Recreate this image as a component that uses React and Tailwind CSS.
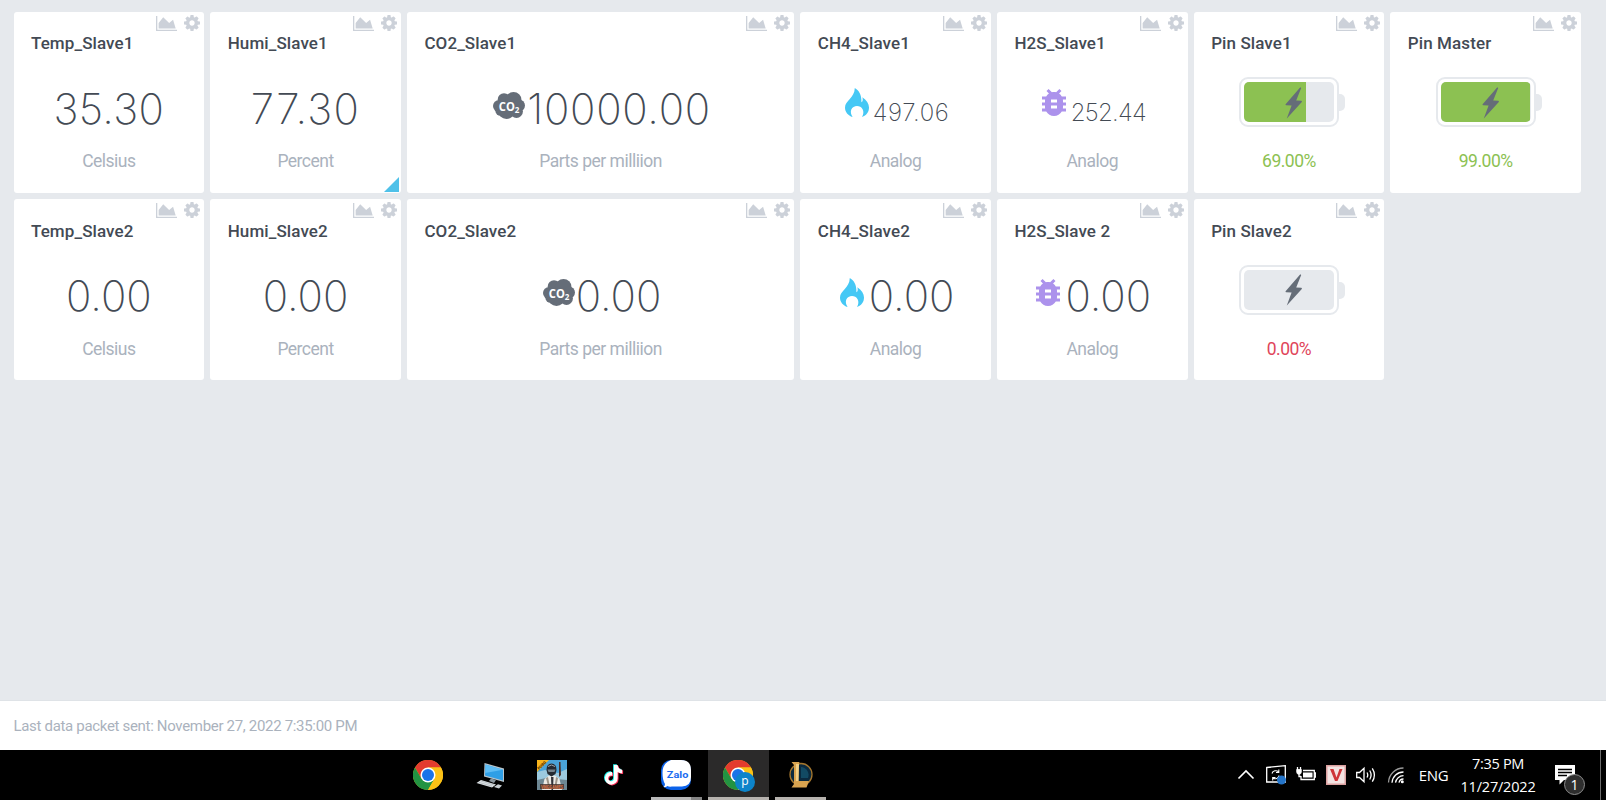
import { MdBugReport } from "react-icons/md";

const AreaIcon = () => (
  <svg viewBox="0 128 2048 1536" preserveAspectRatio="none" className="mt-px h-[15px] w-[21px]" fill="#ccd1d9">
    <path d="M2048 1536v128h-2048v-1536h128v1408h1920zm-384-1024l256 896h-1664v-576l448-576 576 576z" />
  </svg>
);

const CogIcon = () => (
  <svg viewBox="0 128 1536 1536" className="h-4 w-4" fill="#ccd1d9">
    <path d="M1024 896q0-106-75-181t-181-75-181 75-75 181 75 181 181 75 181-75 75-181zm512-109v222q0 12-8 23t-20 13l-185 28q-19 54-39 91 35 50 107 138 10 12 10 25t-9 23q-27 37-99 108t-94 71q-12 0-26-9l-138-108q-44 23-91 38-16 136-29 186-7 28-36 28h-222q-14 0-24.5-8.5t-11.5-21.5l-28-184q-49-16-90-37l-141 107q-10 9-25 9-14 0-25-11-126-114-165-168-7-10-7-23 0-12 8-23 15-21 51-66.5t54-70.5q-27-50-41-99l-183-27q-13-2-21-12.5t-8-23.5v-222q0-12 8-23t19-13l186-28q14-46 39-92-40-57-107-138-10-12-10-24 0-10 9-23 26-36 98.5-107.5t94.5-71.5q13 0 26 10l138 107q44-23 91-38 16-136 29-186 7-28 36-28h222q14 0 24.5 8.5t11.5 21.5l28 184q49 16 90 37l142-107q9-9 24-9 13 0 25 10 129 119 165 170 7 8 7 22 0 12-8 23-15 21-51 66.5t-54 70.5q26 50 41 98l183 28q13 2 21 12.5t8 23.5z" />
  </svg>
);

const Co2Icon = () => (
  <svg viewBox="0 0 32 27" className="h-[27px] w-8">
    <g fill="#656d78">
      <circle cx="11" cy="7.5" r="6.3" />
      <circle cx="20.5" cy="8" r="8" />
      <circle cx="6" cy="14" r="6" />
      <circle cx="26" cy="13.5" r="6" />
      <circle cx="13.5" cy="18.5" r="8.5" />
      <circle cx="23.5" cy="19.5" r="6.4" />
      <circle cx="7.5" cy="18.5" r="5.2" />
    </g>
    <text x="5.8" y="18.6" fill="#fff" fontFamily="Open Sans, sans-serif" fontWeight="700" fontSize="12" textLength="16" lengthAdjust="spacingAndGlyphs">CO</text>
    <text x="21.8" y="20.6" fill="#fff" fontFamily="Open Sans, sans-serif" fontWeight="700" fontSize="8">2</text>
  </svg>
);

const FlameIcon = () => (
  <svg viewBox="0 0 24 29" className="h-[29px] w-6" fill="#45c8f5">
    <path d="M9.8 0C13.5 2.2 16.8 6.2 16.4 14.2C18 13.3 18 11.4 17.3 9.2C21.6 12 24 15.5 24 19.6C24 24 21.6 27.6 17 29C18.6 26.5 18.8 23.6 17.6 21.3C16.5 19.1 14.3 18 12 18C9.4 18 7.3 19.3 6.3 21.6C5.4 23.9 5.9 26.7 7.6 29C3 27.3 0 24 0 19.4C0 12.8 9.6 9.8 9.8 0Z" />
  </svg>
);

const BugIcon = () => <MdBugReport viewBox="4 3 16 18" preserveAspectRatio="none" className="h-[27px] w-6 text-[#ac92ec]" />;

const Battery = ({ level, second }) => (
  <div className="relative h-[50px] w-[100px] rounded-[9px] border-2 border-[#e6e9ed] p-[3px]">
    <div className="h-10 w-[90px] overflow-hidden rounded-[5px] bg-[#e6e9ed]">
      <div className="h-full bg-[#8cc152]" style={{ width: `${level}%` }} />
    </div>
    <div className="absolute -right-[8px] top-[15px] h-[17px] w-[6px] rounded-r-[5px] bg-[#e6e9ed]" />
    <svg viewBox="0 0 18 32" className={`absolute left-[44px] h-8 w-[18px] ${second ? "top-[7px]" : "top-[8px]"}`} fill="#656d78">
      <path d="M15.3 0.3L0.6 17.2Q0.2 18 1.2 18.3L6.6 18.6L1.8 31.6L16.8 15Q17.3 14 16.3 13.7L11.2 13.4L16.2 1Z" />
    </svg>
  </div>
);

const icons = { co2: <Co2Icon />, flame: <FlameIcon />, bug: <BugIcon /> };

const rows = [
  [
    { title: "Temp_Slave1", value: "35.30", track: "tracking-[0.35px]", unit: "Celsius" },
    { title: "Humi_Slave1", value: "77.30", track: "tracking-[1.3px]", unit: "Percent", corner: true },
    { title: "CO2_Slave1", value: "10000.00", track: "tracking-[0.75px]", gap: "gap-[2px]", unit: "Parts per milliion", icon: "co2", wide: true },
    { title: "CH4_Slave1", value: "497.06", track: "tracking-[0.6px]", gap: "gap-[4px]", unit: "Analog", icon: "flame", small: true },
    { title: "H2S_Slave1", value: "252.44", track: "tracking-[-0.7px]", gap: "gap-[5px]", unit: "Analog", icon: "bug", small: true },
    { title: "Pin Slave1", level: 69, unit: "69.00%" },
    { title: "Pin Master", level: 99, unit: "99.00%" },
  ],
  [
    { title: "Temp_Slave2", value: "0.00", track: "tracking-[0px]", unit: "Celsius" },
    { title: "Humi_Slave2", value: "0.00", track: "tracking-[0px]", unit: "Percent" },
    { title: "CO2_Slave2", value: "0.00", track: "tracking-[0px]", gap: "gap-[1px]", unit: "Parts per milliion", icon: "co2", wide: true },
    { title: "CH4_Slave2", value: "0.00", track: "tracking-[0px]", gap: "gap-[5px]", unit: "Analog", icon: "flame" },
    { title: "H2S_Slave 2", value: "0.00", track: "tracking-[0px]", gap: "gap-[5px]", unit: "Analog", icon: "bug" },
    { title: "Pin Slave2", level: 0, unit: "0.00%" },
  ],
];

function Card({ title, value, track, gap, unit, icon, level, small, wide, corner, second }) {
  const battery = level !== undefined;
  const unitColor = !battery ? "text-[#aab2bd]" : level > 0 ? "text-[#8cc152]" : "text-[#e0455a]";
  return (
    <div className={`relative flex h-[181px] flex-col rounded-[3px] bg-white ${wide ? "col-span-2" : ""}`}>
      <div className="absolute right-[4px] top-[3px] flex gap-[7px]">
        <AreaIcon />
        <CogIcon />
      </div>
      <div className={`pl-[17.5px] text-[17px] font-medium leading-5 tracking-[0.1px] text-[#434a54] ${second ? "pt-[22px]" : "pt-[21px]"}`}>{title}</div>
      <div className={`flex h-[98px] items-center justify-center ${gap ? `${gap} pl-[3px]` : ""} ${second && !battery ? "-mt-px" : ""}`}>
        {battery ? (
          <Battery level={level} second={second} />
        ) : (
          <>
            {icon && <div className={small ? "" : "mt-[6px]"}>{icons[icon]}</div>}
            <span
              className={`font-[Inter] font-[160] leading-none text-[#434a54] ${track} ${
                small ? "mt-[21px] text-[24px]" : "mt-[13px] text-[42px]"
              }`}
            >
              {value}
            </span>
          </>
        )}
      </div>
      <div className={`text-center text-[17.5px] leading-5 tracking-[-0.5px] ${unitColor} ${second && !battery ? "mt-px" : ""}`}>{unit}</div>
      {corner && (
        <svg viewBox="0 0 15 15" className="absolute bottom-px right-[2px] h-[15px] w-[15px]" fill="#4fc1e9">
          <path d="M15 0V15H0Z" />
        </svg>
      )}
    </div>
  );
}

const Chrome = () => (
  <svg viewBox="0 0 48 48" className="h-[30px] w-[30px]">
    <circle cx="24" cy="24" r="24" fill="#fbc116" />
    <path d="M24 12H44.8A24 24 0 0 0 3.2 12L13.6 30Z" fill="#e33b2e" />
    <path d="M3.2 12A24 24 0 0 0 24 48L34.4 30L24 24L13.6 30Z" fill="#229342" />
    <path d="M24 12H44.8A24 24 0 0 1 24 48L34.4 30Z" fill="#fbc116" />
    <circle cx="24" cy="24" r="12" fill="#fff" />
    <circle cx="24" cy="24" r="9.6" fill="#1a73e8" />
  </svg>
);

const Computer = () => (
  <svg viewBox="0 0 30 30" className="h-[30px] w-[30px]">
    <path d="M9.500 3L29 8.500V22L9 16.500Z" fill="#b9c4cb" />
    <path d="M10.500 4.500L28 9.700V20.500L10 15.500Z" fill="#2f9fe6" />
    <path d="M10.500 4.500L28 9.700L10.200 13Z" fill="#5ebdf4" />
    <path d="M16 18.500L21 20L19 23L14 21Z" fill="#8b979f" />
    <path d="M6 20L21 24.500L17 27.500L1.500 23Z" fill="#dce1e4" />
    <path d="M23 24.200L27 25.400L24 28.500L19 27Z" fill="#c7ced2" />
    <path d="M4 22.400L17 26.200M6 21L19 25" stroke="#9ba5ab" strokeWidth=".5" />
  </svg>
);

const Pubg = () => (
  <svg viewBox="0 0 30 30" className="h-[30px] w-[30px]">
    <rect width="30" height="30" fill="#4aa3d8" />
    <path d="M0 12L8 10L21 13L30 9V30H0Z" fill="#9cc9de" />
    <path d="M0 20L9 18L30 20V30H0Z" fill="#6d8793" />
    <path d="M0 0H12L0 12Z" fill="#f8b41b" />
    <text x="0" y="0" transform="translate(2 10) rotate(-45)" fontFamily="Roboto, sans-serif" fontWeight="900" fontSize="4" fill="#553300">PUBG</text>
    <path d="M22 2L23.500 2L24 15L22 17Z" fill="#4d3029" />
    <path d="M5 30L7.500 19L12 15.500H18L22.500 19L25 30Z" fill="#eceae5" />
    <path d="M14 17L14.500 30H16L16.500 17Z" fill="#34343a" />
    <path d="M9 18L11 17L13 27L11.500 28ZM21 18L19 17L17.500 27L19 28Z" fill="#9d9488" />
    <path d="M9.500 10Q9.500 3.500 14.500 3.500Q19.500 3.500 19.500 10L18.500 14L14.500 16.500L10.500 14Z" fill="#252a31" />
    <path d="M10.500 9.500H18.500L17.500 12H11.500Z" fill="#76828a" />
    <path d="M11 6.500Q14.500 3.500 18 6.500" stroke="#9aa3aa" strokeWidth="1" fill="none" />
    <rect x="3" y="24" width="24" height="5" fill="#412d28" fillOpacity=".8" />
    <text x="4" y="28.500" fontFamily="Roboto, sans-serif" fontWeight="900" fontSize="5" fill="#c8693f" textLength="22" lengthAdjust="spacingAndGlyphs">VNGGAMES</text>
  </svg>
);

const NOTE = "M11 1H15C15.200 4 17 6 20 6.300V10.200C18.200 10.200 16.500 9.600 15 8.600V15.500A7 7 0 1 1 9 8.700V12.700A3.200 3.200 0 1 0 11 15.500Z";
const TikTok = () => (
  <svg viewBox="0 0 22 24" className="h-[22px] w-[20px]">
    <path d={NOTE} fill="#25f4ee" transform="translate(-1 -.8)" />
    <path d={NOTE} fill="#fe2c55" transform="translate(1 .8)" />
    <path d={NOTE} fill="#fff" />
  </svg>
);

const Zalo = () => (
  <svg viewBox="0 0 30 30" className="h-[30px] w-[30px]">
    <rect width="30" height="30" rx="10" fill="#0b62ea" />
    <path d="M10 0H20Q30 0 30 10V17Q30 26 21 26.500H11Q8 27 6.500 26Q5 27.500 2.500 27Q4 26 4 24Q1.500 20 1.500 13Q1.500 3 10 0Z" fill="#fff" />
    <text x="5.800" y="17.500" fontFamily="Roboto, sans-serif" fontWeight="700" fontSize="9.500" fill="#1d6df0" textLength="21.500" lengthAdjust="spacingAndGlyphs">Zalo</text>
  </svg>
);

const League = () => (
  <svg viewBox="0 0 26 28" className="h-[28px] w-[26px]">
    <circle cx="14" cy="13.500" r="11" fill="#0b2a3f" stroke="#a4762e" strokeWidth="1.300" />
    <path d="M14 6A8 8 0 0 1 21 17H14Z" fill="#124a63" />
    <path d="M4.500 1H12.500L11.500 4V20H22L19.500 26.500H4.500L7 23V4Z" fill="#d9a450" />
    <path d="M9 3H12L11.500 20H9Z" fill="#f3d087" />
  </svg>
);

const apps = [
  { el: <Chrome /> },
  { el: <Computer /> },
  { el: <Pubg /> },
  { el: <TikTok /> },
  { el: <Zalo />, stacked: true },
  { el: <Chrome />, active: true },
  { el: <League />, open: true },
];

function TaskApp({ el, stacked, active, open }) {
  return (
    <div className={`relative flex h-[50px] w-[62px] items-center justify-center ${active ? "border-l border-black bg-[#2b2a2a] pr-px" : ""}`}>
      {el}
      {active && (
        <div className="absolute left-[27px] top-[22px] flex h-5 w-5 items-center justify-center rounded-full bg-[#0d84ca] pb-[2px] text-[12px] leading-none text-white">p</div>
      )}
      {active && <div className="absolute bottom-0 left-0 h-[3px] w-full bg-[#b6b2ae]" />}
      {open && <div className="absolute bottom-0 left-[6px] h-[3px] w-[51px] bg-[#b6b2ae]" />}
      {stacked && (
        <div className="absolute bottom-0 left-[6px] flex h-[3px]">
          <div className="w-10 bg-[#b9b9b9]" />
          <div className="w-[11px] bg-[#858585]" />
        </div>
      )}
    </div>
  );
}

const line = { fill: "none", stroke: "#fff", strokeWidth: 1.3 };
const tray = [
  <svg viewBox="0 0 20 20" className="h-5 w-5" {...line} strokeWidth="1.6"><path d="M2.500 13.500L10 6L17.500 13.500" /></svg>,
  <svg viewBox="0 0 20 20" className="h-5 w-5" {...line}>
    <path d="M0.700 2.500L19.300 0.700V17H0.700Z" />
    <path d="M6 8.500A3.800 3.800 0 0 1 12.500 7M13 10.500A3.800 3.800 0 0 1 7 13M12.800 4.500V7.500H10M6.700 15.500V12.500H9.500" strokeWidth="1.100" />
    <circle cx="15.500" cy="15" r="4.500" fill="#2474c8" stroke="none" />
  </svg>,
  <svg viewBox="0 0 20 20" className="h-5 w-5" {...line}>
    <path d="M7 5.500H18.300V14.500H5V11M18.500 8H19.700V12H18.500M1.500 2V5M4.500 2V5M3 8V11.500H5" />
    <path d="M0.700 4.500H5.300V7A2 2 0 0 1 .7 7Z" fill="#fff" strokeWidth=".8" />
    <rect x="7" y="7.500" width="9.500" height="5" fill="#fff" stroke="none" />
  </svg>,
  <svg viewBox="0 0 20 20" className="h-5 w-5">
    <rect width="20" height="20" fill="#dba0a0" />
    <rect x="1.500" y="1.500" width="17" height="17" fill="#f3e3e2" />
    <path d="M4 4H7.500L10.500 12.500L13.500 4H16.500L11.500 16H9Z" fill="#cf3438" />
  </svg>,
  <svg viewBox="0 0 20 20" className="h-5 w-5" {...line}>
    <path d="M.7 7.500H3.500L8 3.200V16.800L3.500 12.500H.7ZM11 7.500Q12.500 10 11 12.500M13.700 5.500Q16.500 10 13.700 14.500M16.300 3.300Q20.500 10 16.300 16.700" />
  </svg>,
  <svg viewBox="0 0 20 20" className="h-5 w-5" {...line}>
    <path d="M2.500 17.500A15 15 0 0 1 17.500 3" stroke="#9a9a9a" />
    <path d="M6 17.700A11.500 11.500 0 0 1 17.500 7M9.500 17.700A8 8 0 0 1 17.500 10.700M13 17.700A4.500 4.500 0 0 1 17.500 14" />
    <circle cx="16.300" cy="16.800" r="1.500" fill="#fff" stroke="none" />
  </svg>,
];

function Taskbar() {
  return (
    <div className="flex h-[50px] bg-black pl-[397px] font-['Open_Sans',sans-serif] text-white">
      {apps.map((a, i) => (
        <TaskApp key={i} {...a} />
      ))}
      <div className="ml-auto flex items-center">
        {tray.map((t, i) => (
          <div key={i} className="flex w-[30px] justify-center">{t}</div>
        ))}
        <div className="w-[45px] text-center text-[15px] leading-5 tracking-[-0.4px]">ENG</div>
        <div className="w-[84px] text-center text-[14.5px] leading-[23px] tracking-[-0.2px]">
          <div className="tracking-[-0.3px]">7:35 PM</div>
          <div>11/27/2022</div>
        </div>
        <div className="relative flex h-[50px] w-[61px] border-r border-[#6b6b6b] pl-[15px] pt-[15px]">
          <svg viewBox="0 0 20 20" className="h-5 w-5">
            <path d="M0 0H20V15H9L4.500 19.500V15H0Z" fill="#fff" />
            <path d="M3 4.500H17M3 7.500H17M3 10.500H12" stroke="#000" strokeWidth="1.300" />
          </svg>
          <div className="absolute left-[24px] top-[24px] flex h-[21px] w-[21px] items-center justify-center rounded-full border border-[#8d8d8d] bg-[#2e2e2e] text-[14px] leading-none">1</div>
        </div>
        <div className="w-[5px]" />
      </div>
    </div>
  );
}

export default function App() {
  return (
    <div className="flex h-[800px] w-[1606px] flex-col overflow-hidden bg-[#e6e9ed] font-[Roboto,sans-serif]">
      <div className="flex flex-1 flex-col gap-[6px] pl-[13.5px] pr-[25px] pt-3">
        {rows.map((r, i) => (
          <div key={i} className="grid grid-cols-8 gap-[6px]">
            {r.map((c) => (
              <Card key={c.title} {...c} second={i === 1} />
            ))}
          </div>
        ))}
      </div>
      <div className="flex h-[50px] items-center border-t border-[#dfe3e7] bg-white pl-[13.5px] pt-[2px] text-[15px] tracking-[-0.32px] text-[#aab2bd]">
        Last data packet sent: November 27, 2022 7:35:00 PM
      </div>
      <Taskbar />
    </div>
  );
}
